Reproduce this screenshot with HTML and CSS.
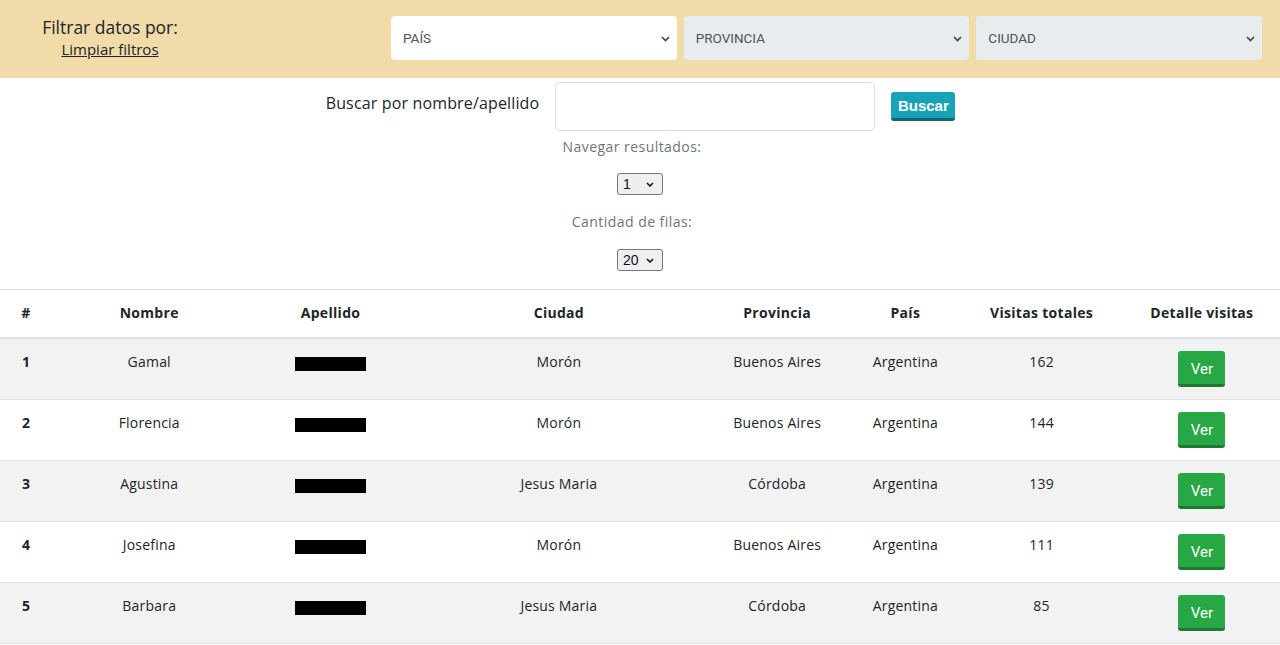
FILE: index.html
```html
<!DOCTYPE html>
<html lang="es">
<head>
<meta charset="utf-8">
<title>Visitas</title>
<link rel="stylesheet" href="styles.css">
</head>
<body>
<header class="filters">
  <div class="filters-title">
    <div class="title">Filtrar datos por:</div>
    <a class="clear" href="#">Limpiar filtros</a>
  </div>
  <div class="selects">
    <div class="sel sel-active">
      <select class="big-select"><option>PAÍS</option></select>
      <svg class="chev" width="9" height="6" viewBox="0 0 9 6"><path d="M1 1l3.5 3.5L8 1" fill="none" stroke="#3d4246" stroke-width="1.6"/></svg>
    </div>
    <div class="sel">
      <select class="big-select" disabled><option>PROVINCIA</option></select>
      <svg class="chev" width="9" height="6" viewBox="0 0 9 6"><path d="M1 1l3.5 3.5L8 1" fill="none" stroke="#3d4246" stroke-width="1.6"/></svg>
    </div>
    <div class="sel">
      <select class="big-select" disabled><option>CIUDAD</option></select>
      <svg class="chev" width="9" height="6" viewBox="0 0 9 6"><path d="M1 1l3.5 3.5L8 1" fill="none" stroke="#3d4246" stroke-width="1.6"/></svg>
    </div>
  </div>
</header>

<section class="search">
  <label class="search-label" for="q">Buscar por nombre/apellido</label>
  <input id="q" class="search-input" type="text">
  <button class="btn-buscar" type="button">Buscar</button>
</section>

<section class="nav">
  <div class="nav-label">Navegar resultados:</div>
  <div class="mini">
    <select class="mini-select"><option>1</option></select>
    <svg class="mini-chev" width="8" height="5" viewBox="0 0 8 5"><path d="M1 1l3 3 3-3" fill="none" stroke="#111" stroke-width="1.5"/></svg>
  </div>
  <div class="nav-label nav-label-2">Cantidad de filas:</div>
  <div class="mini">
    <select class="mini-select"><option>20</option></select>
    <svg class="mini-chev" width="8" height="5" viewBox="0 0 8 5"><path d="M1 1l3 3 3-3" fill="none" stroke="#111" stroke-width="1.5"/></svg>
  </div>
</section>

<table class="results">
  <colgroup>
    <col class="c1"><col class="c2"><col class="c3"><col class="c4"><col class="c5"><col class="c6"><col class="c7"><col class="c8">
  </colgroup>
  <thead>
    <tr><th>#</th><th>Nombre</th><th>Apellido</th><th>Ciudad</th><th>Provincia</th><th>País</th><th>Visitas totales</th><th>Detalle visitas</th></tr>
  </thead>
  <tbody>
    <tr class="odd"><td class="num">1</td><td>Gamal</td><td><span class="redacted"></span></td><td>Morón</td><td>Buenos Aires</td><td>Argentina</td><td>162</td><td><button class="btn-ver" type="button">Ver</button></td></tr>
    <tr><td class="num">2</td><td>Florencia</td><td><span class="redacted"></span></td><td>Morón</td><td>Buenos Aires</td><td>Argentina</td><td>144</td><td><button class="btn-ver" type="button">Ver</button></td></tr>
    <tr class="odd"><td class="num">3</td><td>Agustina</td><td><span class="redacted"></span></td><td>Jesus Maria</td><td>Córdoba</td><td>Argentina</td><td>139</td><td><button class="btn-ver" type="button">Ver</button></td></tr>
    <tr><td class="num">4</td><td>Josefina</td><td><span class="redacted"></span></td><td>Morón</td><td>Buenos Aires</td><td>Argentina</td><td>111</td><td><button class="btn-ver" type="button">Ver</button></td></tr>
    <tr class="odd"><td class="num">5</td><td>Barbara</td><td><span class="redacted"></span></td><td>Jesus Maria</td><td>Córdoba</td><td>Argentina</td><td>85</td><td><button class="btn-ver" type="button">Ver</button></td></tr>
  </tbody>
</table>
</body>
</html>
```

FILE: styles.css
```css
* { box-sizing: border-box; }
html, body { margin: 0; padding: 0; }
body {
  font-family: "Open Sans", "Inter", sans-serif;
  color: #212529;
  background: #fff;
  font-size: 14px;
  letter-spacing: 0.2px;
}

/* Filters header */
.filters {
  background: #f0dba9;
  height: 78px;
  padding: 16px 18px 0 0;
  display: grid;
  grid-template-columns: 220px 1fr;
  column-gap: 171px;
  align-items: start;
}
.filters-title { text-align: center; }
.title { font-size: 17.5px; line-height: 23px; color: #212529; letter-spacing: 0; }
.clear { font-size: 15px; line-height: 20px; color: #212529; text-decoration: underline; letter-spacing: 0; }

.selects { display: flex; gap: 7px; }
.sel { position: relative; flex: 1; height: 44px; }
.big-select {
  appearance: none;
  -webkit-appearance: none;
  width: 100%;
  height: 44px;
  border: 0;
  border-radius: 4px;
  background: #e9ecef;
  color: #4d545b;
  padding: 0 0 0 12px;
  font-family: "Liberation Sans Narrow", "Roboto", sans-serif;
  font-weight: 400;
  font-size: 13.5px;
  letter-spacing: 0;
  opacity: 1;
}
.sel-active .big-select { background: #fff; }
.chev { position: absolute; right: 7px; top: 20px; pointer-events: none; }

/* Search */
.search {
  display: flex;
  justify-content: center;
  align-items: center;
  margin-top: 4px;
  margin-left: 1px;
}
.search-label { font-size: 16px; line-height: 22px; padding-bottom: 8px; margin-right: 16px; letter-spacing: 0.15px; }
.search-input {
  width: 320px;
  height: 49px;
  border: 1px solid #dfe2e6;
  border-radius: 4px;
  margin-right: 16px;
}
.btn-buscar {
  width: 64px;
  height: 29px;
  background: #17a2b8;
  border: 0;
  border-bottom: 3px solid #0c6674;
  border-radius: 3px;
  color: #fff;
  font-family: "Liberation Sans", Arial, sans-serif;
  font-weight: bold;
  font-size: 15px;
  letter-spacing: 0;
  padding: 0;
}

/* Navigation */
.nav { display: flex; flex-direction: column; align-items: center; }
.nav-label { color: #6c757d; font-size: 14px; line-height: 20px; margin-top: 6px; margin-left: -16px; letter-spacing: 0.45px; }
.nav-label-2 { margin-top: 17px; }
.mini { position: relative; margin-top: 16px; width: 46px; height: 22px; }
.nav-label-2 + .mini { margin-top: 17px; }
.mini-select {
  appearance: none;
  -webkit-appearance: none;
  display: block;
  width: 46px;
  height: 22px;
  border: 1px solid #767676;
  border-radius: 3px;
  background: #efeff1;
  color: #111;
  font-family: "Liberation Sans", Arial, sans-serif;
  font-size: 14px;
  letter-spacing: 0;
  padding: 0 0 0 5px;
}
.mini-chev { position: absolute; right: 9px; top: 9px; pointer-events: none; }

/* Table */
.results {
  width: 100%;
  border-collapse: collapse;
  table-layout: fixed;
  margin-top: 18px;
  border-top: 1px solid #dee2e6;
}
.c1 { width: 52px; } .c2 { width: 194px; } .c3 { width: 168px; } .c4 { width: 288px; }
.c5 { width: 148px; } .c6 { width: 108px; } .c7 { width: 164px; } .c8 { width: 156px; }
.results th, .results td {
  padding: 12px 0;
  text-align: center;
  vertical-align: top;
  line-height: 21px;
  font-size: 14px;
}
.results th { font-weight: 700; border-bottom: 2px solid #dee2e6; padding-top: 12px; padding-bottom: 14px; letter-spacing: 0.3px; }
.results td { border-bottom: 1px solid #dee2e6; }
.results th:first-child, .results td.num { font-weight: 700; }
.results tr.odd td { background: #f2f2f2; }
.redacted { display: inline-block; width: 71px; height: 14px; background: #000; vertical-align: middle; margin-top: 1px; }
.btn-ver {
  width: 47px;
  height: 36px;
  background: #28a745;
  border: 0;
  border-bottom: 3px solid #1c7a32;
  border-radius: 3px;
  color: #fff;
  font-family: "Liberation Sans Narrow", "Roboto", sans-serif;
  font-weight: 400;
  font-size: 15px;
  letter-spacing: 0;
  padding: 2px 0 0;
}
```
